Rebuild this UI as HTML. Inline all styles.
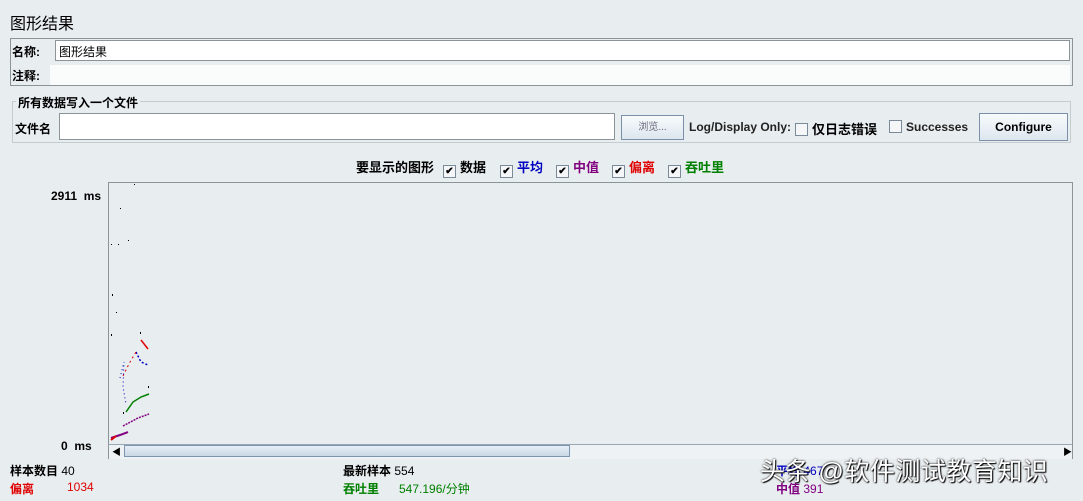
<!DOCTYPE html>
<html><head><meta charset="utf-8"><style>
body{margin:0;width:1083px;height:501px;background:#e8edef;font-family:"Liberation Sans","Noto Sans CJK SC",sans-serif;font-size:12px;color:#000;position:relative;overflow:hidden}
.a{position:absolute;white-space:nowrap}
.b{font-weight:bold}
.in{position:absolute;background:#fff;border:1px solid #8a9499;box-sizing:border-box}
.cb{display:inline-block;width:11px;height:11px;border:1px solid #7a8a99;background:#f4f6f8;vertical-align:-2px;margin-right:4px;font-size:10px;line-height:11px;text-align:center}
.btn{position:absolute;border:1px solid #7a8fa8;background:linear-gradient(#f8fbfd,#dde6ee);box-sizing:border-box;text-align:center}
</style></head><body>
<div class="a" style="left:10px;top:10px;font-size:16px">图形结果</div>
<div style="position:absolute;left:10px;top:38px;width:1063px;height:48px;border:1px solid #8a9499;box-sizing:border-box"></div>
<div class="a b" style="left:12px;top:43px">名称:</div>
<div class="in" style="left:55px;top:40px;width:1015px;height:21px;padding:2px 3px">图形结果</div>
<div class="a b" style="left:12px;top:67px">注释:</div>
<div style="position:absolute;left:50px;top:65px;width:1020px;height:20px;background:#fafcfc"></div>
<div style="position:absolute;left:12px;top:101px;width:1059px;height:42px;border:1px solid #c4ccd0;box-sizing:border-box"></div>
<div class="a b" style="left:16px;top:94px;background:#e8edef;padding:0 2px">所有数据写入一个文件</div>
<div class="a b" style="left:15px;top:120px">文件名</div>
<div class="in" style="left:59px;top:113px;width:556px;height:27px"></div>
<div class="btn" style="left:621px;top:115px;width:63px;height:25px;font-size:10px;color:#667;line-height:23px">浏览...</div>
<div class="a b" style="left:689px;top:120px;color:#222">Log/Display Only:</div>
<div class="a b" style="left:795px;top:119px;font-size:13px"><span class="cb"></span>仅日志错误</div>
<div class="a b" style="left:889px;top:120px;color:#222"><span class="cb"></span>Successes</div>
<div class="btn b" style="left:979px;top:113px;width:89px;height:28px;line-height:26px">Configure</div>
<div class="a b" style="left:356px;top:157px;font-size:13px">要显示的图形</div>
<div class="a b" style="left:443px;top:157px;font-size:13px"><span class="cb">✔</span>数据</div>
<div class="a b" style="left:500px;top:157px;font-size:13px;color:#0000c0"><span class="cb" style="color:#000">✔</span>平均</div>
<div class="a b" style="left:556px;top:157px;font-size:13px;color:#800080"><span class="cb" style="color:#000">✔</span>中值</div>
<div class="a b" style="left:612px;top:157px;font-size:13px;color:#e00000"><span class="cb" style="color:#000">✔</span>偏离</div>
<div class="a b" style="left:668px;top:157px;font-size:13px;color:#008000"><span class="cb" style="color:#000">✔</span>吞吐里</div>
<div class="a b" style="left:51px;top:189px">2911&nbsp; ms</div>
<div class="a b" style="left:61px;top:439px">0&nbsp; ms</div>
<div style="position:absolute;left:108px;top:182px;width:965px;height:277px;border:1px solid #8a9499;box-sizing:border-box"></div>
<svg style="position:absolute;left:108px;top:182px" width="60" height="262">
<g fill="#000"><rect x="26" y="2" width="1" height="1"/><rect x="12" y="26" width="1" height="1"/><rect x="3" y="62" width="1" height="1"/><rect x="20" y="58" width="1" height="1"/><rect x="10" y="62" width="1" height="1"/><rect x="4" y="112" width="1" height="2"/><rect x="8" y="130" width="1" height="1"/><rect x="3" y="152" width="1" height="2"/><rect x="32" y="150" width="1" height="2"/><rect x="40" y="204" width="1" height="2"/><rect x="15" y="230" width="1" height="2"/></g>
<polyline points="33,158 40,167" stroke="#e00000" stroke-width="1.5" fill="none"/>
<polyline points="28,170 33,180 40,183" stroke="#0000c0" stroke-width="1.5" stroke-dasharray="2 2" fill="none"/>
<polyline points="15,194 22,180 28,170" stroke="#e00000" stroke-dasharray="2 3" fill="none"/>
<polyline points="18,230 25,220 33,215 41,212" stroke="#008000" stroke-width="1.5" fill="none"/>
<polyline points="15,244 30,236 41,232" stroke="#800080" stroke-width="1.5" stroke-dasharray="2 1" fill="none"/>
<polyline points="3,256 12,253 20,250" stroke="#800080" stroke-width="2" fill="none"/>
<polyline points="3,258 8,254" stroke="#e00000" stroke-width="2" fill="none"/>
<polyline points="12,196 16,180 15,205 18,222" stroke="#0000c0" stroke-dasharray="1 3" fill="none"/>
</svg>
<div style="position:absolute;left:109px;top:444px;width:963px;height:14px;background:#eef2f5;border-top:1px solid #9aa8b4"></div>
<div style="position:absolute;left:124px;top:445px;width:446px;height:12px;background:linear-gradient(#e6eef6,#c9d8e6);border:1px solid #7d95b0;box-sizing:border-box"></div>
<div class="a" style="left:112px;top:445px;font-size:9px">◀</div>
<div class="a" style="left:1063px;top:445px;font-size:9px">▶</div>
<div class="a b" style="left:10px;top:462px">样本数目 <span style="font-weight:normal">40</span></div>
<div class="a b" style="left:10px;top:480px;color:#e00000">偏离</div>
<div class="a" style="left:67px;top:480px;color:#e00000">1034</div>
<div class="a b" style="left:343px;top:462px">最新样本 <span style="font-weight:normal">554</span></div>
<div class="a b" style="left:343px;top:480px;color:#008000">吞吐里</div>
<div class="a" style="left:399px;top:480px;color:#008000">547.196/分钟</div>
<div class="a b" style="left:776px;top:462px;color:#0000c0">平均 <span style="font-weight:normal">467</span></div>
<div class="a b" style="left:776px;top:480px;color:#800080">中值 <span style="font-weight:normal">391</span></div>
<div class="a" style="left:760px;top:452px;font-size:25px;letter-spacing:0.5px;color:#fff;text-shadow:0 0 2px #000,1px 1px 1px #000">头条 @软件测试教育知识</div>
</body></html>
